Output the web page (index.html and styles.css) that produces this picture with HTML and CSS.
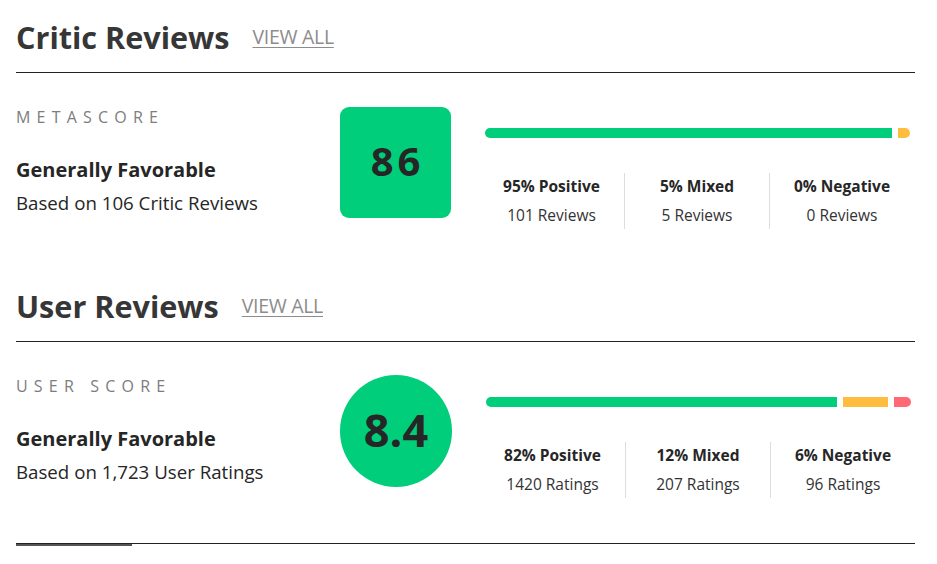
FILE: index.html
```html
<!DOCTYPE html>
<html lang="en">
<head>
	<meta charset="UTF-8">
	<title>Reviews</title>
	<link rel="stylesheet" href="styles.css">
</head>
<body>
<div class="wrap">
	<div class="section">
		<div class="head">
			<h2>Critic Reviews</h2>
			<a href="javascript:" class="view">VIEW ALL</a>
		</div>
		<div class="row">
			<div class="info">
				<div class="label">METASCORE</div>
				<div class="verdict">Generally Favorable</div>
				<div class="based">Based on 106 Critic Reviews</div>
			</div>
			<div class="score box">86</div>
			<div class="dist">
				<div class="bar">
					<span class="seg green" style="flex:408"></span>
					<span class="seg yellow" style="flex:12"></span>
				</div>
				<ul class="stats">
					<li><b>95% Positive</b><span>101 Reviews</span></li>
					<li><b>5% Mixed</b><span>5 Reviews</span></li>
					<li><b>0% Negative</b><span>0 Reviews</span></li>
				</ul>
			</div>
		</div>
	</div>
	<div class="section">
		<div class="head">
			<h2>User Reviews</h2>
			<a href="javascript:" class="view">VIEW ALL</a>
		</div>
		<div class="row">
			<div class="info">
				<div class="label">USER SCORE</div>
				<div class="verdict">Generally Favorable</div>
				<div class="based">Based on 1,723 User Ratings</div>
			</div>
			<div class="score circle">8.4</div>
			<div class="dist">
				<div class="bar">
					<span class="seg green" style="flex:352"></span>
					<span class="seg yellow" style="flex:45"></span>
					<span class="seg red" style="flex:17"></span>
				</div>
				<ul class="stats">
					<li><b>82% Positive</b><span>1420 Ratings</span></li>
					<li><b>12% Mixed</b><span>207 Ratings</span></li>
					<li><b>6% Negative</b><span>96 Ratings</span></li>
				</ul>
			</div>
		</div>
	</div>
	<div class="tabs"><span class="tab"></span></div>
</div>
</body>
</html>
```

FILE: styles.css
```css
* {
	margin: 0;
	padding: 0;
}
body {
	font-family: "Open Sans", "Liberation Sans", sans-serif;
	color: #262626;
	background: #fff;
}
.wrap {
	width: 899px;
	margin-left: 16px;
	padding-bottom: 16px;
}
.section {
	margin-bottom: 40px;
}
.head {
	display: flex;
	align-items: center;
	gap: 23px;
	padding: 16px 0 14px;
	border-bottom: 1px solid #222;
}
.head h2 {
	font-size: 30.6px;
	line-height: 42px;
	font-weight: 700;
	color: #363636;
}
.view {
	font-size: 19.5px;
	line-height: 42px;
	color: #8c8c8c;
	text-decoration: underline;
	text-underline-offset: 3px;
	text-decoration-thickness: 1px;
	letter-spacing: -0.3px;
}
.row {
	display: flex;
	align-items: flex-start;
	margin-top: 34px;
}
.info {
	width: 324px;
}
.label {
	font-size: 16px;
	line-height: 20px;
	letter-spacing: 6.2px;
	color: #7d7d7d;
}
.verdict {
	font-size: 20px;
	line-height: 26px;
	font-weight: 700;
	margin-top: 30px;
}
.based {
	font-size: 18.7px;
	line-height: 26px;
	margin-top: 7px;
}
.score {
	width: 111px;
	height: 111px;
	box-sizing: border-box;
	background: #00ce7a;
	display: flex;
	align-items: center;
	justify-content: center;
	font-weight: 700;
	color: #262626;
}
.box {
	border-radius: 9px;
	font-size: 40px;
	letter-spacing: 4px;
	text-indent: 4px;
	padding-bottom: 5px;
}
.circle {
	width: 112px;
	height: 112px;
	margin-top: -1px;
	border-radius: 50%;
	font-size: 45px;
	padding-bottom: 3px;
}
.dist {
	width: 435px;
	margin-left: 28px;
}
.bar {
	display: flex;
	gap: 6px;
	height: 10px;
	margin: 21px 4px 0 6px;
}
.seg {
	display: block;
	height: 10px;
}
.seg:first-child {
	border-radius: 5px 0 0 5px;
}
.seg:last-child {
	border-radius: 0 5px 5px 0;
}
.green {
	background: #00ce7a;
}
.yellow {
	background: #ffbd3f;
}
.red {
	background: #ff6874;
}
.stats {
	list-style: none;
	display: flex;
	margin-top: 35px;
}
.stats li {
	width: 145px;
	height: 56px;
	display: flex;
	flex-direction: column;
	align-items: center;
	padding-top: 2px;
	box-sizing: border-box;
	border-left: 1px solid #ddd;
}
.stats li:first-child {
	border-left: none;
}
.stats b {
	font-size: 15.5px;
	line-height: 22px;
	font-weight: 700;
}
.stats span {
	font-size: 15.5px;
	line-height: 22px;
	margin-top: 7px;
	color: #333;
}
.tabs {
	border-top: 1px solid #222;
	margin-top: 45px;
}
.tab {
	display: block;
	width: 116px;
	height: 2px;
	background: #555;
}
```
